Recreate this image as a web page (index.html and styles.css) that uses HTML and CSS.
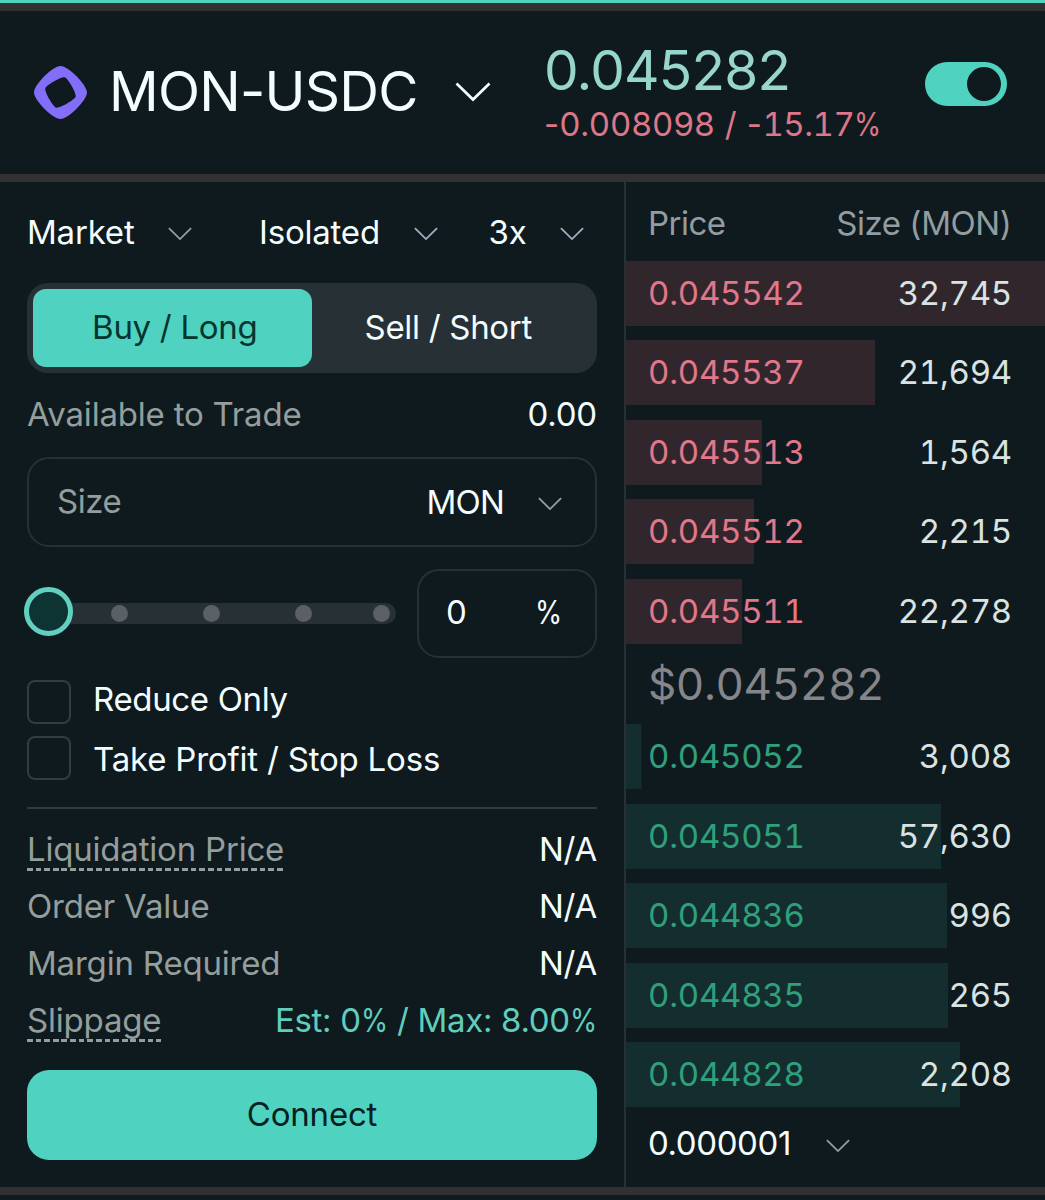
FILE: index.html
```html
<!DOCTYPE html>
<html lang="en">
<head>
<meta charset="utf-8">
<title>MON-USDC</title>
<link rel="stylesheet" href="styles.css">
</head>
<body>
<svg width="0" height="0" class="defs" aria-hidden="true">
  <symbol id="chev" viewBox="0 0 24 14"><path d="M0.9 1.1 12 12.1 23.1 1.1" fill="none" stroke="currentColor" stroke-width="1.8"/></symbol>
</svg>
<div class="app">
  <header class="top">
    <svg class="logo" viewBox="0 0 53 53"><path fill="#836ef9" fill-rule="evenodd" d="M26.500 0C18.800 0 0 18.800 0 26.500C0 34.200 18.800 53 26.500 53C34.200 53 53 34.200 53 26.500C53 18.800 34.200 0 26.500 0ZM22.300 41.700C19.100 40.800 10.400 25.600 11.300 22.400C12.200 19.100 27.500 10.400 30.700 11.300C33.900 12.200 42.600 27.400 41.700 30.600C40.800 33.900 25.500 42.600 22.300 41.700Z"/></svg>
    <h1 class="pair">MON-USDC</h1>
    <svg class="pair-chev" viewBox="0 0 36 20"><path d="M1.500 1.500 18 17.500 34.500 1.500" fill="none" stroke="#f4fdff" stroke-width="2.700" /></svg>
    <div class="quote">
      <div class="last">0.045282</div>
      <div class="change">-0.008098 / -<span class="tab-num">15.17</span><span class="pc">%</span></div>
    </div>
    <div class="toggle"><div class="knob"></div></div>
  </header>
  <main class="main">
    <section class="form">
      <div class="selects">
        <div class="select market"><span>Market</span><svg class="chev"><use href="#chev"/></svg></div>
        <div class="select margin"><span>Isolated</span><svg class="chev cool"><use href="#chev"/></svg></div>
        <div class="select lev"><span>3x</span><svg class="chev cool"><use href="#chev"/></svg></div>
      </div>
      <div class="tabs">
        <div class="tab active">Buy / Long</div>
        <div class="tab">Sell / Short</div>
      </div>
      <div class="avail"><span class="muted">Available to Trade</span><span>0.00</span></div>
      <div class="size-box">
        <span class="muted size-label">Size</span>
        <span class="unit">MON</span><svg class="chev"><use href="#chev"/></svg>
      </div>
      <div class="slider-row">
        <div class="track"><i class="dot"></i><i class="dot"></i><i class="dot"></i><i class="dot last-dot"></i><div class="thumb"></div></div>
        <div class="pct"><span>0</span><span class="pc">%</span></div>
      </div>
      <div class="check reduce"><i class="box"></i><span>Reduce Only</span></div>
      <div class="check tpsl"><i class="box"></i><span>Take Profit / Stop Loss</span></div>
      <div class="rule"></div>
      <div class="stats">
        <div class="stat"><span class="muted dashed">Liquidation Price</span><span>N/A</span></div>
        <div class="stat"><span class="muted">Order Value</span><span>N/A</span></div>
        <div class="stat"><span class="muted">Margin Required</span><span>N/A</span></div>
        <div class="stat"><span class="muted dashed">Slippage</span><span class="accent">Est: 0<span class="pc">%</span> / Max: 8.00<span class="pc">%</span></span></div>
      </div>
      <div class="connect">Connect</div>
    </section>
    <section class="book">
      <div class="book-head"><span>Price</span><span>Size (MON)</span></div>
      <div class="levels asks">
        <div class="level" style="--depth:419px"><span>0.045542</span><span class="qty">32,745</span></div>
        <div class="level" style="--depth:249px"><span>0.045537</span><span class="qty">21,694</span></div>
        <div class="level" style="--depth:136px"><span>0.045513</span><span class="qty">1,564</span></div>
        <div class="level" style="--depth:128px"><span>0.045512</span><span class="qty">2,215</span></div>
        <div class="level" style="--depth:116px"><span>0.045511</span><span class="qty">22,278</span></div>
      </div>
      <div class="mid">$0.045282</div>
      <div class="levels bids">
        <div class="level" style="--depth:15.5px"><span>0.045052</span><span class="qty">3,008</span></div>
        <div class="level" style="--depth:315px"><span>0.045051</span><span class="qty">57,630</span></div>
        <div class="level" style="--depth:321px"><span>0.044836</span><span class="qty">996</span></div>
        <div class="level" style="--depth:322px"><span>0.044835</span><span class="qty">265</span></div>
        <div class="level" style="--depth:334px"><span>0.044828</span><span class="qty">2,208</span></div>
      </div>
      <div class="tick"><span>0.000001</span><svg class="chev"><use href="#chev"/></svg></div>
    </section>
  </main>
</div>
</body>
</html>
```
FILE: styles.css
```css
* { box-sizing: border-box; }
body {
  margin: 0;
  background: #0f1a1f;
  color: #f4fdfd;
  font: 400 33px/40px Inter, sans-serif;
  letter-spacing: -0.200px;
  white-space: nowrap;
}
.defs { position: absolute; }
.app {
  height: 1200px;
  overflow: hidden;
  display: flex;
  flex-direction: column;
  border-top: 3px solid #50d2c1;
}
.top {
  height: 179px;
  border-top: 8px solid #303130;
  border-bottom: 8px solid #303130;
  display: flex;
  align-items: flex-start;
  flex: none;
}
.logo { width: 53px; height: 53px; margin: 54.500px 0 0 34px; flex: none; }
.pair { margin: 50px 0 0 22px; width: 347px; font-size: 55px; font-weight: 400; line-height: 60px; letter-spacing: -0.750px; }
.pair-chev { width: 36px; height: 20px; margin: 70.500px 0 0 -1px; flex: none; }
.quote { margin: 29px 0 0 53px; width: 381px; }
.last { font-size: 55px; line-height: 60px; color: #98d5ca; letter-spacing: -0.800px; }
.change { line-height: 40px; margin-top: 4px; color: #dc7689; letter-spacing: 0.400px; }
.tab-num { font-feature-settings: "tnum"; letter-spacing: -0.500px; }
.pc { display: inline-block; transform: scaleX(0.840); transform-origin: 0 50%; margin-right: -5px; }
.toggle {
  width: 82px; height: 44px; margin-top: 51px;
  border-radius: 22px; background: #50d2c1;
  display: flex; align-items: center; justify-content: flex-end;
  padding-right: 6px; flex: none;
}
.knob { width: 34px; height: 34px; border-radius: 50%; background: #0f1a1f; }
.main { display: flex; height: 1013px; border-bottom: 8px solid #303130; flex: none; }
.form { width: 626px; border-right: 2px solid #273035; padding: 0 27px; }
.chev { width: 24px; height: 14px; color: #949e9c; flex: none; }
.cool { color: #a3acc0; }
.selects { display: grid; grid-template-columns: 231px 230.500px 1fr; height: 100.500px; align-items: center; }
.select { display: flex; align-items: center; justify-content: space-between; }
.select .chev { margin-top: 3px; }
.market { padding-right: 66.500px; }
.margin { padding-left: 1px; padding-right: 50.500px; }
.lev { padding-right: 13.500px; }
.tabs { height: 90px; padding: 6px; border-radius: 21px; background: #273035; display: flex; }
.tab { flex: 1; border-radius: 13px; text-align: center; line-height: 77px; letter-spacing: -0.300px; padding-right: 6px; }
.active { background: #50d2c1; color: #04352e; padding: 0 0 0 5px; }
.muted { color: #949e9c; }
.avail { display: flex; justify-content: space-between; align-items: center; height: 82.500px; margin-bottom: 2px; }
.size-box {
  height: 89.500px; border: 2px solid #273035; border-radius: 22px;
  display: flex; align-items: center; padding: 0 33px 0 28px;
}
.size-label { margin-bottom: 2px; letter-spacing: -0.500px; }
.unit { margin-left: auto; margin-right: 34px; letter-spacing: -0.800px; }
.size-box .chev { margin-top: 4px; }
.slider-row { display: flex; align-items: center; height: 89px; margin-top: 22.500px; }
.track {
  position: relative; width: 369px; height: 21px; border-radius: 11px; background: #273035;
  display: flex; align-items: center; padding-left: 84px; gap: 75px;
}
.dot { width: 17px; height: 17px; border-radius: 50%; background: #5a6065; flex: none; }
.last-dot { margin-left: -14px; }
.thumb {
  position: absolute; left: -3px; top: -16px; width: 49px; height: 49px;
  border: 5px solid #62d0c0; border-radius: 50%; background: #0e3333;
}
.pct {
  width: 180px; height: 89px; margin-left: 21px; border: 2px solid #273035; border-radius: 22px;
  display: flex; justify-content: space-between; align-items: center; padding: 0 33px 3px 27px;
}
.check { display: flex; align-items: center; height: 44px; gap: 22px; }
.reduce { margin-top: 22px; letter-spacing: -0.350px; }
.tpsl { margin-top: 11.500px; }
.box { width: 44px; height: 44px; border: 2px solid #333c41; border-radius: 8px; }
.reduce span { margin-bottom: 6px; }
.tpsl span { margin-top: 3px; }
.rule { height: 2px; margin-top: 27.500px; background: #303a3f; }
.stats { padding-top: 11.500px; }
.stat { display: flex; justify-content: space-between; align-items: center; height: 57px; }
.dashed {
  padding-bottom: 2px; margin-bottom: -2px;
  background: repeating-linear-gradient(90deg, #949e9c 0 5.700px, transparent 5.700px 8.620px) 0 100% / 100% 3px no-repeat;
}
.accent { color: #61cdbd; letter-spacing: -0.300px; }
.connect {
  margin-top: 21.500px; height: 90px; border-radius: 22px; background: #50d2c1;
  color: #04201f; text-align: center; line-height: 89px;
}
.book { width: 419px; font-feature-settings: "tnum"; letter-spacing: -0.250px; }
.book-head { display: flex; justify-content: space-between; height: 79px; padding: 21px 33px 0 22px; color: #929da1; letter-spacing: -0.500px; }
.levels { display: grid; gap: 14.500px; grid-auto-rows: 65px; }
.level { display: flex; justify-content: space-between; align-items: center; padding: 0 33px 1px 22px; }
.asks { gap: 14.400px; }
.asks .level { color: #e0778b; background: linear-gradient(#32262d, #32262d) 0 0 / var(--depth) 100% no-repeat; }
.bids .level { color: #2fa07c; background: linear-gradient(#142e2f, #142e2f) 0 0 / var(--depth) 100% no-repeat; }
.level .qty { color: #d9e3e2; }
.mid { height: 80.900px; line-height: 80px; padding-left: 22px; font-size: 44px; color: #86858a; letter-spacing: -0.400px; }
.tick { display: flex; align-items: center; height: 72px; padding-left: 22px; letter-spacing: -0.400px; font-feature-settings: normal; }
.tick span { width: 145px; }
.tick .chev { margin: 6px 0 0 33px; }
```
